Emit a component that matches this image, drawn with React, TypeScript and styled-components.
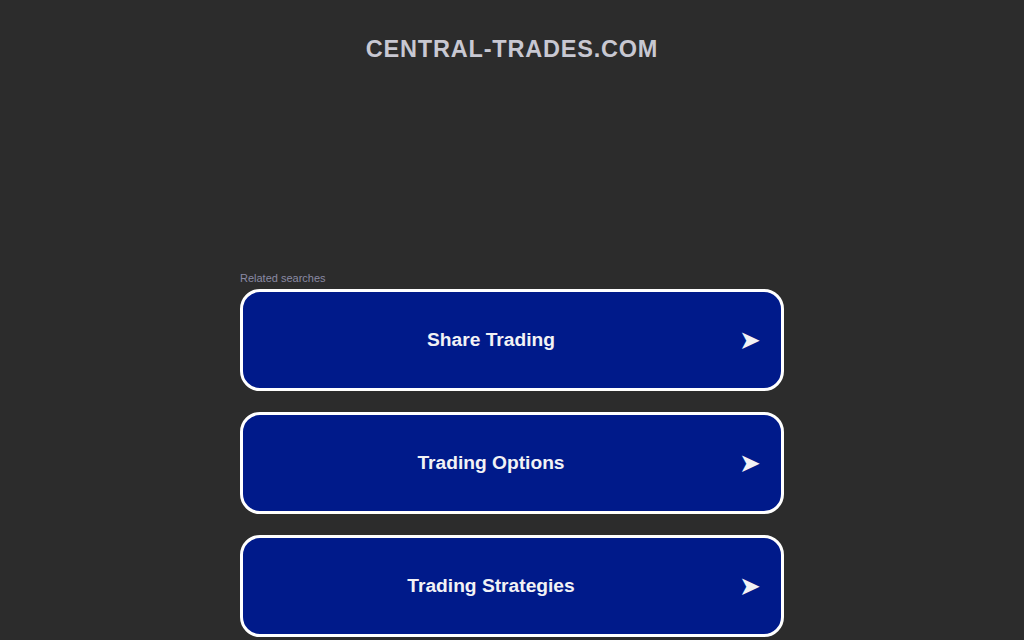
import React from 'react';
import styled, { createGlobalStyle } from 'styled-components';

const GlobalStyle = createGlobalStyle`
  html, body {
    margin: 0;
    padding: 0;
    background: #2c2c2c;
    font-family: 'Liberation Sans', Arial, sans-serif;
  }
`;

const Page = styled.div`
  display: flex;
  flex-direction: column;
  align-items: center;
  height: 640px;
  overflow: hidden;
`;

const Domain = styled.h1`
  margin: 35px 0 0;
  font-size: 23.5px;
  line-height: 28px;
  font-weight: bold;
  letter-spacing: 0.8px;
  color: #c8c8d2;
`;

const Related = styled.div`
  width: 544px;
  margin-top: 209px;
  display: flex;
  flex-direction: column;
`;

const Label = styled.p`
  margin: 0 0 4px;
  font-size: 11px;
  line-height: 13px;
  color: #8a8aa4;
`;

const List = styled.div`
  display: flex;
  flex-direction: column;
  gap: 21px;
`;

const Link = styled.a`
  display: flex;
  align-items: center;
  box-sizing: border-box;
  height: 102px;
  border: 3px solid #ffffff;
  border-radius: 20px;
  background: #001a8a;
  color: #f2f2f5;
  text-decoration: none;
  padding-right: 20px;
`;

const Text = styled.span`
  flex: 1;
  text-align: center;
  font-size: 19.2px;
  font-weight: bold;
`;

const Arrow = styled.span`
  font-size: 26px;
  line-height: 1;
`;

const searches = ['Share Trading', 'Trading Options', 'Trading Strategies'];

const App = () => {
  return (
    <Page>
      <GlobalStyle />
      <Domain>CENTRAL-TRADES.COM</Domain>
      <Related>
        <Label>Related searches</Label>
        <List>
          {searches.map((s) => (
            <Link key={s} href="#">
              <Text>{s}</Text>
              <Arrow>➤</Arrow>
            </Link>
          ))}
        </List>
      </Related>
    </Page>
  );
};

export default App;
